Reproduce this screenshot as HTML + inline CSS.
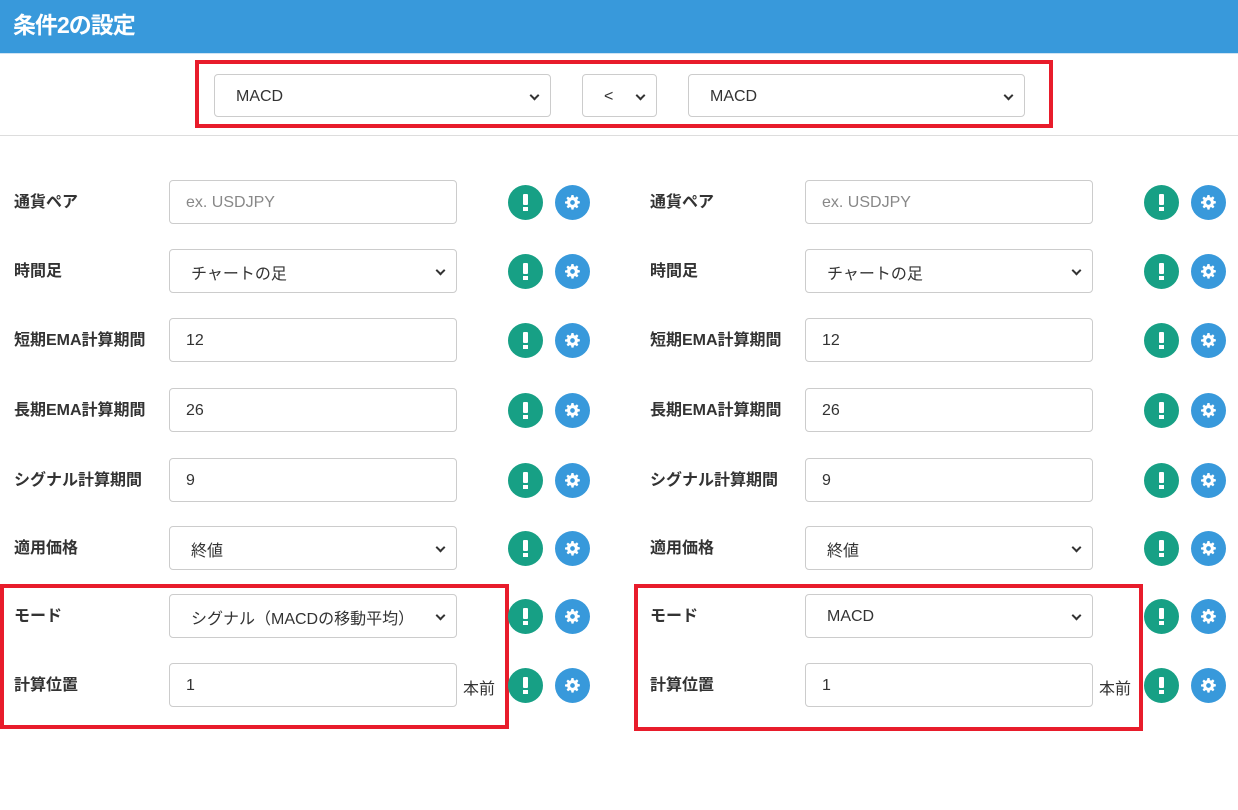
<!DOCTYPE html>
<html><head><meta charset="utf-8"><style>
body{margin:0;width:1238px;height:810px;background:#fff;position:relative;overflow:hidden;font-family:"Liberation Sans","Noto Sans CJK JP",sans-serif;color:#333}
.hdr{position:absolute;left:0;top:0;width:1238px;height:53px;background:#3899db;border-bottom:1px solid #cfe3f3}
.hdr span{position:absolute;left:13px;top:6px;color:#fff;font-weight:bold;font-size:23px;letter-spacing:-1px}
.box{position:absolute;border:4px solid #e81c2b;box-sizing:border-box}
.f{position:absolute;box-sizing:border-box;border:1px solid #ccc;border-radius:4px;background:#fff;font-size:16px;height:44px;padding-left:16px;white-space:nowrap;overflow:hidden;display:flex;align-items:center}
.f span{position:relative;top:1px}
.s{padding-left:21px}
.s:after{content:"";position:absolute;right:12px;top:17px;width:5px;height:5px;border-right:2px solid #333;border-bottom:2px solid #333;transform:rotate(45deg)}
.ph{color:#888}
.l{position:absolute;font-weight:bold;font-size:16px;line-height:20px}
.ic{position:absolute;width:35px;height:35px;border-radius:50%}
.g{background:#17a085}
.g:after{content:"";position:absolute;left:15px;top:9px;width:5px;height:11px;background:#fff;border-radius:1px}
.g:before{content:"";position:absolute;left:15px;top:22px;width:5px;height:4px;background:#fff}
.b{background:#3899db}
.b svg{position:absolute;left:10px;top:10px}
.u{position:absolute;font-size:16px}
</style></head><body>
<div class="hdr"><span>条件2の設定</span></div>
<div style="position:absolute;left:0;top:135px;width:1238px;height:1px;background:#ddd"></div>
<div class="box" style="left:195px;top:60px;width:858px;height:68px"></div>
<div class="f s" style="left:214px;top:74px;width:337px;height:43px"><span>MACD</span></div>
<div class="f s" style="left:582px;top:74px;width:75px;height:43px"><span>&lt;</span></div>
<div class="f s" style="left:688px;top:74px;width:337px;height:43px"><span>MACD</span></div>
<div class="box" style="left:0;top:584px;width:509px;height:145px"></div>
<div class="box" style="left:634px;top:584px;width:509px;height:147px"></div>
<div id="c"></div>
<script>
var rows=[["通貨ペア","ex. USDJPY",0,1],["時間足","チャートの足",1,0],["短期EMA計算期間","12",0,0],["長期EMA計算期間","26",0,0],["シグナル計算期間","9",0,0],["適用価格","終値",1,0],["モード",null,1,0],["計算位置","1",0,0]];
var ys=[180,249,318,388,458,526,594,663];
var gear='<svg width="15" height="15" viewBox="0 0 16 16"><path fill="#fff" d="M6.9 0h2.2l.4 2.2 1.3.6 1.9-1.3 1.6 1.6-1.3 1.9.6 1.3 2.2.4v2.2l-2.2.4-.6 1.3 1.3 1.9-1.6 1.6-1.9-1.3-1.3.6-.4 2.2H6.9l-.4-2.2-1.3-.6-1.9 1.3-1.6-1.6 1.3-1.9-.6-1.3L0 9.1V6.9l2.2-.4.6-1.3-1.3-1.9 1.6-1.6 1.9 1.3 1.3-.6zM8 5.5a2.5 2.5 0 1 0 0 5 2.5 2.5 0 0 0 0-5z"/></svg>';
var h='';
[0,636].forEach(function(dx,side){
rows.forEach(function(r,i){var y=ys[i];
var v=r[1]; if(v===null) v=side?"MACD":"シグナル（MACDの移動平均）";
h+='<div class="l" style="left:'+(14+dx)+'px;top:'+(y+13)+'px">'+r[0]+'</div>';
h+='<div class="f'+(r[2]?' s':'')+'" style="left:'+(169+dx)+'px;top:'+y+'px;width:288px;'+(r[2]?'padding-right:34px;':'')+'"><span'+(r[3]?' class="ph"':'')+'>'+v+'</span></div>';
if(i==7)h+='<div class="u" style="left:'+(463+dx)+'px;top:'+(y+12)+'px">本前</div>';
h+='<div class="ic g" style="left:'+(508+dx)+'px;top:'+(y+5)+'px"></div>';
h+='<div class="ic b" style="left:'+(555+dx)+'px;top:'+(y+5)+'px">'+gear+'</div>';
});});
document.getElementById('c').innerHTML=h;
</script>
</body></html>
